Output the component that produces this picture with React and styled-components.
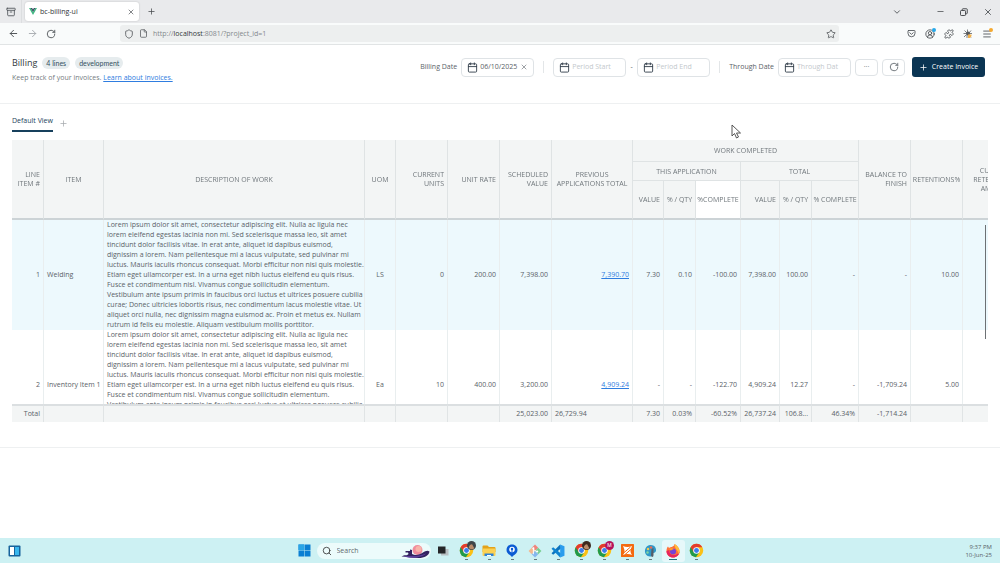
import { useState } from "react";
import styled, { createGlobalStyle } from "styled-components";
import {
  Archive,
  ArrowLeft,
  ArrowRight,
  Calendar,
  ChevronDown,
  CircleUserRound,
  File,
  Menu,
  Minus,
  Plus,
  Puzzle,
  RotateCw,
  Search,
  Shield,
  Star,
  X,
} from "lucide-react";

const LOREM = [
  "Lorem ipsum dolor sit amet, consectetur adipiscing elit. Nulla ac ligula nec",
  "lorem eleifend egestas lacinia non mi. Sed scelerisque massa leo, sit amet",
  "tincidunt dolor facilisis vitae. In erat ante, aliquet id dapibus euismod,",
  "dignissim a lorem. Nam pellentesque mi a lacus vulputate, sed pulvinar mi",
  "luctus. Mauris iaculis rhoncus consequat. Morbi efficitur non nisi quis molestie.",
  "Etiam eget ullamcorper est. In a urna eget nibh luctus eleifend eu quis risus.",
  "Fusce et condimentum nisl. Vivamus congue sollicitudin elementum.",
  "Vestibulum ante ipsum primis in faucibus orci luctus et ultrices posuere cubilia",
  "curae; Donec ultricies lobortis risus, nec condimentum lacus molestie vitae. Ut",
  "aliquet orci nulla, nec dignissim magna euismod ac. Proin et metus ex. Nullam",
  "rutrum id felis eu molestie. Aliquam vestibulum mollis porttitor.",
].join("\n");

const COLUMNS = [
  { key: "line", width: 32, align: "right" },
  { key: "item", width: 60, align: "left" },
  { key: "description", width: 261, align: "left" },
  { key: "uom", width: 31, align: "center" },
  { key: "units", width: 52, align: "right" },
  { key: "rate", width: 52, align: "right" },
  { key: "scheduled", width: 52, align: "right" },
  { key: "previous", width: 81, align: "right", link: true },
  { key: "appValue", width: 31, align: "right" },
  { key: "appQty", width: 32, align: "right" },
  { key: "appComplete", width: 45, align: "right" },
  { key: "totalValue", width: 39, align: "right" },
  { key: "totalQty", width: 32, align: "right" },
  { key: "totalComplete", width: 47, align: "right" },
  { key: "balance", width: 52, align: "right" },
  { key: "retentions", width: 52, align: "right" },
  { key: "retentionAmount", width: 52, align: "right" },
];

const ROWS = [
  {
    line: "1",
    item: "Welding",
    description: LOREM,
    uom: "LS",
    units: "0",
    rate: "200.00",
    scheduled: "7,398.00",
    previous: "7,390.70",
    appValue: "7.30",
    appQty: "0.10",
    appComplete: "-100.00",
    totalValue: "7,398.00",
    totalQty: "100.00",
    totalComplete: "-",
    balance: "-",
    retentions: "10.00",
  },
  {
    line: "2",
    item: "Inventory Item 1",
    description: LOREM,
    uom: "Ea",
    units: "10",
    rate: "400.00",
    scheduled: "3,200.00",
    previous: "4,909.24",
    appValue: "-",
    appQty: "-",
    appComplete: "-122.70",
    totalValue: "4,909.24",
    totalQty: "12.27",
    totalComplete: "-",
    balance: "-1,709.24",
    retentions: "5.00",
  },
];

const TOTALS = {
  line: "Total",
  scheduled: "25,023.00",
  previous: "26,729.94",
  appValue: "7.30",
  appQty: "0.03%",
  appComplete: "-60.52%",
  totalValue: "26,737.24",
  totalQty: "106.8...",
  totalComplete: "46.34%",
  balance: "-1,714.24",
};

const VueLogo = () => (
  <svg width="8" height="7" viewBox="0 0 16 14" aria-hidden="true">
    <path d="M0 0h3.3L8 8.2 12.7 0H16L8 14z" fill="#41b883" />
    <path d="M3.3 0h3L8 3l1.7-3h3L8 8.2z" fill="#35495e" />
  </svg>
);

const RestoreIcon = () => (
  <svg width="8" height="8" viewBox="0 0 16 16" fill="none" stroke="#3c4043" strokeWidth="1.8" aria-hidden="true">
    <rect x="1" y="5" width="10" height="10" rx="1.5" />
    <path d="M4.5 4.5V3A1.5 1.5 0 0 1 6 1.5h7A1.5 1.5 0 0 1 14.5 3v7a1.5 1.5 0 0 1-1.5 1.5h-1.5" />
  </svg>
);

const PocketIcon = () => (
  <svg width="9" height="9" viewBox="0 0 18 18" fill="none" stroke="#54585c" strokeWidth="1.8" strokeLinecap="round" strokeLinejoin="round" aria-hidden="true">
    <path d="M3 3h12a1 1 0 0 1 1 1v4.5a7 7 0 0 1-14 0V4a1 1 0 0 1 1-1z" />
    <path d="M5.5 7.5 9 10.7l3.5-3.2" />
  </svg>
);

const BugIcon = () => (
  <svg width="10" height="10" viewBox="0 0 20 20" aria-hidden="true">
    <path d="M3 3l5 5M9 1v6M16 3l-4 5M1 9h6M2 16l5-5M18 9h-5M8 18v-6M16 17l-4-5" stroke="#565a5d" strokeWidth="1.5" />
    <circle cx="10" cy="9" r="4" fill="#565a5d" />
    <path d="M10 11h7v3l-3 4h-4z" fill="#f3b24c" />
  </svg>
);

const ChromeLogo = ({ badge, badgeText }) => (
  <svg width="19" height="19" viewBox="0 0 34 34" aria-hidden="true">
    <circle cx="17" cy="17" r="12" fill="#fbc116" />
    <path d="M17 17 6.6 11A12 12 0 0 0 16 29l6-9z" fill="#219a4b" />
    <path d="M6.6 11A12 12 0 0 1 27.4 11H17l-5 9z" fill="#e33b2e" />
    <circle cx="17" cy="17" r="5.8" fill="#fff" />
    <circle cx="17" cy="17" r="4.4" fill="#3b7ded" />
    {badge && <circle cx="26" cy="8" r="8" fill={badge} />}
    {badge && !badgeText && <path d="M21 12c1-4 3-6 6-6l4 7c-3 3-7 2-10-1z" fill="#b98b6a" />}
    {badgeText && (
      <text x="26" y="11" fontSize="9" fontFamily="Roboto, sans-serif" textAnchor="middle" fill="#fff">
        {badgeText}
      </text>
    )}
  </svg>
);

const WindowsLogo = () => (
  <svg width="13" height="13" viewBox="0 0 26 26" aria-hidden="true">
    <path d="M1 1h11.5v11.5H1zM13.5 1H25v11.5H13.5zM1 13.5h11.5V25H1zM13.5 13.5H25V25H13.5z" fill="#0b7fd3" />
    <path d="M1 1h11.5v11.5H1z" fill="#2aa5e6" />
  </svg>
);

const WidgetsIcon = () => (
  <svg width="13" height="12" viewBox="0 0 26 24" aria-hidden="true">
    <rect x="1" y="1" width="24" height="22" rx="2" fill="#17639c" />
    <rect x="4" y="4" width="8" height="16" fill="#fff" />
    <rect x="14" y="4" width="8" height="16" fill="#39b7ee" />
  </svg>
);

const SearchArt = () => (
  <svg width="30" height="14" viewBox="0 0 60 28" aria-hidden="true">
    <circle cx="33" cy="12" r="10" fill="#f08c9c" />
    <circle cx="35" cy="10" r="6" fill="#f8b3a8" />
    <path d="M1 25c6-4 11-1 14-5l-1-3h-5v-3h9v-3l4 1v8c8 4 15 1 22-3 5-3 9-5 13-2-1 8-10 13-22 13C22 28 11 25 1 25z" fill="#33225f" />
    <path d="M6 25c14-3 26 2 44-6-6 8-28 11-44 6z" fill="#5b3c99" />
  </svg>
);

const TaskViewIcon = () => (
  <svg width="12" height="12" viewBox="0 0 24 24" aria-hidden="true">
    <rect x="8" y="8" width="15" height="13" fill="#b9c0c3" />
    <rect x="2" y="3" width="15" height="14" fill="#242628" />
  </svg>
);

const FolderIcon = () => (
  <svg width="14" height="14" viewBox="0 0 28 28" aria-hidden="true">
    <path d="M1 5a2 2 0 0 1 2-2h8l3 3h11a2 2 0 0 1 2 2v8H1z" fill="#e3a21a" />
    <rect x="1" y="9" width="26" height="15" rx="2" fill="#fbd153" />
    <path d="M5 19h18v5H5z" fill="#2c82d8" />
    <path d="M10 22h8v2h-8z" fill="#fff" />
  </svg>
);

const PinIcon = () => (
  <svg width="12" height="13" viewBox="0 0 24 26" aria-hidden="true">
    <path d="M12 1c7 0 11 5 11 11 0 5-4 9-8 11l-3 3-3-3c-4-2-8-6-8-11C1 6 5 1 12 1z" fill="#0b5bd3" />
    <circle cx="12" cy="11" r="5.5" fill="#fff" />
    <circle cx="12" cy="10" r="2.5" fill="#0b5bd3" />
    <path d="M12 11v5" stroke="#0b5bd3" strokeWidth="2" />
  </svg>
);

const GitIcon = () => (
  <svg width="14" height="14" viewBox="0 0 26 26" aria-hidden="true">
    <path d="m13 1 6 6-6 6-6-6z" fill="#f0857c" />
    <path d="m7 7 6 6-6 6-6-6z" fill="#f3b98e" />
    <path d="m19 7 6 6-6 6-6-6z" fill="#79cf92" />
    <path d="m13 13 6 6-6 6-6-6z" fill="#85b7ee" />
    <path d="M10 7v12M10 10l6 4" stroke="#fff" strokeWidth="1.8" />
    <circle cx="10" cy="8" r="2" fill="#fff" />
    <circle cx="17" cy="14" r="2" fill="#fff" />
  </svg>
);

const CodeIcon = () => (
  <svg width="14" height="14" viewBox="0 0 26 26" aria-hidden="true">
    <path d="M17 1 19 8 4 20 1 17z" fill="#0b72bd" />
    <path d="m4 6-3 3 16 16 2-7z" fill="#0f83d0" />
    <path d="m17 1 8 3v18l-8 3z" fill="#2a9ded" />
  </svg>
);

const OrangeAppIcon = () => (
  <svg width="13" height="13" viewBox="0 0 26 26" aria-hidden="true">
    <rect width="26" height="26" rx="1" fill="#f46a10" />
    <path d="M4 4c5 2 11 3 18 0-2 5-3 8-3 10 0 3 1 5 3 8-6-3-12-3-18 0 2-3 3-5 3-8 0-2-1-6-3-10z" fill="#fff" />
    <path d="m4 19 15-13M7 22 22 9" stroke="#f46a10" strokeWidth="2" />
  </svg>
);

const PaintIcon = () => (
  <svg width="13" height="14" viewBox="0 0 26 28" aria-hidden="true">
    <path d="M12 2C20 1 25 7 24 14c-1 4-5 3-7 5s0 6-5 6C5 25 1 19 2 12 3 6 7 3 12 2z" fill="#2e98c9" />
    <circle cx="8" cy="10" r="2.5" fill="#f3c74f" />
    <circle cx="14" cy="7" r="2.5" fill="#e86c55" />
    <circle cx="7" cy="17" r="2.5" fill="#7fd4a1" />
    <path d="m15 10 4-2v14c0 5-5 5-5 0z" fill="#555e68" />
  </svg>
);

const FirefoxLogo = () => (
  <svg width="14" height="14" viewBox="0 0 28 28" aria-hidden="true">
    <path d="M14 27C6 27 1 21 1 14c0-4 1-7 3-9l2 3c2-2 4-2 6-2l1-1c3-1 4-3 4-5 5 3 10 8 10 14 0 8-6 13-13 13z" fill="#ff7139" />
    <path d="M1 14c0 8 6 13 13 13s13-5 13-12c-2 5-7 8-12 7-6 0-9-5-8-10z" fill="#e8255e" />
    <path d="M17 0c5 3 10 8 10 14 0 3-1 5-2 7 0-5-2-8-5-11-2-3-3-6-3-10z" fill="#ffbd3a" />
    <circle cx="14" cy="15" r="6" fill="#7542d8" />
    <path d="M7 9c4-2 8-1 10 2-3-1-4 1-7 2-2 0-3-2-3-4z" fill="#ff9a2d" />
  </svg>
);

const CursorArrow = () => (
  <svg width="11" height="15" viewBox="0 0 22 30" aria-hidden="true">
    <path d="M2 2v22l5-5 4 9 4-2-4-8h8z" fill="#fff" stroke="#444" strokeWidth="1.8" />
  </svg>
);

const TASKBAR_APPS = [
  { name: "Task view", icon: <TaskViewIcon /> },
  { name: "Chrome profile", icon: <ChromeLogo badge="#3f4549" />, running: true },
  { name: "Files", icon: <FolderIcon />, running: true },
  { name: "Maps", icon: <PinIcon />, running: true },
  { name: "Git", icon: <GitIcon />, running: true },
  { name: "Code", icon: <CodeIcon />, running: true },
  { name: "Chrome work", icon: <ChromeLogo badge="#3d2a20" />, running: true },
  { name: "Chrome M", icon: <ChromeLogo badge="#b5145c" badgeText="M" />, running: true },
  { name: "Orange app", icon: <OrangeAppIcon />, running: true },
  { name: "Paint", icon: <PaintIcon />, running: true },
  { name: "Firefox", icon: <FirefoxLogo />, running: true, active: true },
  { name: "Chrome", icon: <ChromeLogo />, running: true },
];

const DateField = ({ label, hideLabel, placeholder, initial = "" }) => {
  const [value, setValue] = useState(initial);

  return (
    <FieldLabel>
      {!hideLabel && <span>{label}</span>}
      <DateBox>
        <Calendar size={11} color="#333f4b" strokeWidth={2} />
        <DateInput
          type="text"
          aria-label={label}
          placeholder={placeholder}
          value={value}
          onChange={(e) => setValue(e.target.value)}
        />
        {value && (
          <ClearBtn type="button" aria-label="Clear date" onClick={() => setValue("")}>
            <X size={8} />
          </ClearBtn>
        )}
      </DateBox>
    </FieldLabel>
  );
};

const BillingTable = () => (
  <TableArea>
    <TableScroll>
      <Table>
        <colgroup>
          {COLUMNS.map((col) => (
            <Col key={col.key} $width={col.width} />
          ))}
        </colgroup>
        <thead>
          <HeadRow $height={22}>
            <Th rowSpan={3} $align="right" $last>LINE ITEM #</Th>
            <Th rowSpan={3} $last>ITEM</Th>
            <Th rowSpan={3} $last>DESCRIPTION OF WORK</Th>
            <Th rowSpan={3} $last>UOM</Th>
            <Th rowSpan={3} $align="right" $last>CURRENT UNITS</Th>
            <Th rowSpan={3} $align="right" $last>UNIT RATE</Th>
            <Th rowSpan={3} $align="right" $last>SCHEDULED VALUE</Th>
            <Th rowSpan={3} $last>PREVIOUS APPLICATIONS TOTAL</Th>
            <Th colSpan={6}>WORK COMPLETED</Th>
            <Th rowSpan={3} $align="right" $last>BALANCE TO FINISH</Th>
            <Th rowSpan={3} $last $tight>RETENTIONS%</Th>
            <Th rowSpan={3} $align="right" $last>CURRENT RETENTION AMOUNT</Th>
          </HeadRow>
          <HeadRow $height={19}>
            <Th colSpan={3}>THIS APPLICATION</Th>
            <Th colSpan={3}>TOTAL</Th>
          </HeadRow>
          <HeadRow $height={39}>
            <Th $align="right" $last>VALUE</Th>
            <Th $last $tight>% / QTY</Th>
            <Th $last $tight $active>%COMPLETE</Th>
            <Th $align="right" $last>VALUE</Th>
            <Th $last $tight>% / QTY</Th>
            <Th $last $tight>% COMPLETE</Th>
          </HeadRow>
        </thead>
        <tbody>
          {ROWS.map((row, i) => (
            <BodyRow key={row.line} $selected={i === 0}>
              {COLUMNS.map((col) => (
                <Td key={col.key} $align={col.align}>
                  {col.link ? <TextLink href="#">{row[col.key]}</TextLink> : row[col.key]}
                </Td>
              ))}
            </BodyRow>
          ))}
        </tbody>
        <tfoot>
          <tr>
            {COLUMNS.map((col) => (
              <TotalCell key={col.key} $align={col.link ? "left" : col.align}>
                {TOTALS[col.key]}
              </TotalCell>
            ))}
          </tr>
        </tfoot>
      </Table>
    </TableScroll>
    <ScrollThumb />
  </TableArea>
);

export default function App() {
  return (
    <Desktop>
      <GlobalStyle />
      <TabStrip>
        <StripCell>
          <Archive size={10} />
        </StripCell>
        <BrowserTab>
          <VueLogo />
          <TabTitle>bc-billing-ui</TabTitle>
          <IconBtn type="button" aria-label="Close tab">
            <X size={8} />
          </IconBtn>
        </BrowserTab>
        <IconBtn type="button" aria-label="New tab">
          <Plus size={9} />
        </IconBtn>
        <WindowControls>
          <IconBtn type="button" aria-label="List all tabs">
            <ChevronDown size={10} />
          </IconBtn>
          <Spacer />
          <IconBtn type="button" aria-label="Minimize">
            <Minus size={9} />
          </IconBtn>
          <IconBtn type="button" aria-label="Restore">
            <RestoreIcon />
          </IconBtn>
          <IconBtn type="button" aria-label="Close">
            <X size={10} />
          </IconBtn>
        </WindowControls>
      </TabStrip>

      <NavBar>
        <NavGroup>
          <IconBtn type="button" aria-label="Back">
            <ArrowLeft size={11} />
          </IconBtn>
          <IconBtn type="button" aria-label="Forward" $muted>
            <ArrowRight size={11} />
          </IconBtn>
          <IconBtn type="button" aria-label="Reload">
            <RotateCw size={10} />
          </IconBtn>
        </NavGroup>
        <UrlBox>
          <Shield size={10} />
          <File size={9} />
          <Url>
            http://<b>localhost</b>:8081/?project_id=1
          </Url>
          <Star size={10} />
        </UrlBox>
        <ToolGroup>
          <IconBtn type="button" aria-label="Pocket">
            <PocketIcon />
          </IconBtn>
          <IconBtn type="button" aria-label="Account">
            <CircleUserRound size={10} />
            <Dot $color="#27a9ea" />
          </IconBtn>
          <IconBtn type="button" aria-label="Extensions">
            <Puzzle size={10} />
          </IconBtn>
          <IconBtn type="button" aria-label="Debugger">
            <BugIcon />
          </IconBtn>
          <IconBtn type="button" aria-label="Menu">
            <Menu size={10} />
            <Dot $color="#f5a930" />
          </IconBtn>
        </ToolGroup>
      </NavBar>

      <Page>
        <PageHeader>
          <div>
            <TitleRow>
              <Title>Billing</Title>
              <Pill>4 lines</Pill>
              <Pill>development</Pill>
            </TitleRow>
            <Subtitle>
              Keep track of your invoices. <TextLink href="#">Learn about invoices.</TextLink>
            </Subtitle>
          </div>
          <Filters>
            <DateField label="Billing Date" initial="06/10/2025" />
            <Divider />
            <DateField label="Period Start" placeholder="Period Start" hideLabel />
            <Dash>-</Dash>
            <DateField label="Period End" placeholder="Period End" hideLabel />
            <Divider />
            <DateField label="Through Date" placeholder="Through Dat" />
            <ButtonRow>
              <SmallBtn type="button" aria-label="More">
                ···
              </SmallBtn>
              <SmallBtn type="button" aria-label="Refresh">
                <RotateCw size={10} />
              </SmallBtn>
              <PrimaryBtn type="button">
                <Plus size={9} />
                Create Invoice
              </PrimaryBtn>
            </ButtonRow>
          </Filters>
        </PageHeader>
        <Views>
          <ViewTab type="button">Default View</ViewTab>
          <IconBtn type="button" aria-label="Add view" $muted>
            <Plus size={9} />
          </IconBtn>
        </Views>
        <BillingTable />
        <Pointer>
          <CursorArrow />
        </Pointer>
      </Page>

      <Taskbar>
        <WidgetsIcon />
        <TaskApps>
          <TaskBtn type="button" aria-label="Start">
            <WindowsLogo />
          </TaskBtn>
          <SearchBox>
            <Search size={10} color="#333" />
            <SearchInput type="text" aria-label="Search" placeholder="Search" />
            <SearchArt />
          </SearchBox>
          {TASKBAR_APPS.map((app) => (
            <TaskBtn key={app.name} type="button" aria-label={app.name} $running={app.running} $active={app.active}>
              {app.icon}
            </TaskBtn>
          ))}
        </TaskApps>
        <Clock>
          <span>9:37 PM</span>
          <span>10-Jun-25</span>
        </Clock>
      </Taskbar>
    </Desktop>
  );
}

const GlobalStyle = createGlobalStyle`
  * {
    box-sizing: border-box;
  }
  body {
    margin: 0;
    background: #fff;
  }
  body, button, input {
    font-family: "Open Sans", "Noto Sans", sans-serif;
    font-size: 7px;
    line-height: 10px;
    color: #5a6268;
  }
  button {
    padding: 0;
    border: none;
    background: none;
    cursor: pointer;
  }
  svg {
    display: block;
    flex-shrink: 0;
  }
`;

const Desktop = styled.div`
  display: flex;
  flex-direction: column;
  min-height: 100vh;
`;

const TabStrip = styled.div`
  display: flex;
  align-items: center;
  gap: 7px;
  height: 23px;
  padding-right: 7px;
  background: #e9eaec;
  color: #4b4f54;
`;

const StripCell = styled.div`
  display: flex;
  align-items: center;
  justify-content: center;
  width: 22px;
  height: 23px;
  border-right: 1px solid #dcdee0;
  margin-right: -4px;
`;

const BrowserTab = styled.div`
  display: flex;
  align-items: center;
  gap: 3px;
  width: 114px;
  height: 19px;
  padding: 0 3px 0 4px;
  border-radius: 3px;
  background: #fff;
  box-shadow: 0 0 2px rgba(0, 0, 0, 0.2);
`;

const TabTitle = styled.span`
  flex: 1;
  color: #2f3337;
`;

const IconBtn = styled.button`
  position: relative;
  display: flex;
  align-items: center;
  justify-content: center;
  width: 10px;
  height: 12px;
  color: ${({ $muted }) => ($muted ? "#a5aaae" : "#45494d")};
`;

const WindowControls = styled.div`
  display: flex;
  gap: 14px;
  margin-left: auto;
`;

const Spacer = styled.div`
  width: 5px;
`;

const NavBar = styled.div`
  display: flex;
  align-items: center;
  height: 22px;
  padding: 0 8px;
  border-bottom: 1px solid #e1e4e5;
  background: #f9fbfb;
`;

const NavGroup = styled.div`
  display: flex;
  gap: 9px;
  width: 112px;
`;

const UrlBox = styled.div`
  display: flex;
  flex: 1;
  align-items: center;
  gap: 5px;
  height: 17px;
  padding: 0 3px 0 4px;
  border-radius: 3px;
  background: #edefef;
  color: #54585c;
`;

const Url = styled.span`
  flex: 1;
  color: #84898d;

  b {
    font-weight: 500;
    color: #33373a;
  }
`;

const ToolGroup = styled.div`
  display: flex;
  justify-content: flex-end;
  gap: 9px;
  width: 153px;
`;

const Dot = styled.span`
  position: absolute;
  top: 0;
  right: -1px;
  width: 4px;
  height: 4px;
  border-radius: 50%;
  background: ${({ $color }) => $color};
`;

const Page = styled.main`
  position: relative;
  flex: 1;
`;

const PageHeader = styled.header`
  display: flex;
  align-items: flex-start;
  justify-content: space-between;
  height: 59px;
  padding: 12px 15px 0 12px;
  border-bottom: 1px solid #eef0f1;
`;

const TitleRow = styled.div`
  display: flex;
  align-items: center;
  gap: 5px;
`;

const Title = styled.h1`
  margin: 0;
  font-size: 9px;
  font-weight: 400;
  line-height: 12px;
  color: #33393e;
`;

const Pill = styled.span`
  padding: 0 4px;
  border-radius: 6px;
  background: #e6ecee;
  font-family: Lato, "Open Sans", sans-serif;
  line-height: 12px;
  color: #34505f;
`;

const Subtitle = styled.p`
  margin: 4px 0 0;
  color: #757c82;
`;

const TextLink = styled.a`
  color: #2f7de0;
  text-decoration: underline;
`;

const Filters = styled.div`
  display: flex;
  align-items: center;
`;

const FieldLabel = styled.label`
  display: flex;
  align-items: center;
  gap: 4px;
`;

const DateBox = styled.span`
  display: flex;
  align-items: center;
  gap: 2px;
  width: 73px;
  height: 19px;
  padding: 0 5px;
  border: 1px solid #dfe3e6;
  border-radius: 4px;
  background: #fff;
`;

const DateInput = styled.input`
  flex: 1;
  width: 0;
  min-width: 0;
  padding: 0;
  border: none;
  outline: none;
  background: none;

  &::placeholder {
    color: #c3c8cc;
  }
`;

const ClearBtn = styled.button`
  color: #6c7378;
`;

const Divider = styled.span`
  width: 1px;
  height: 12px;
  margin: 0 9px;
  background: #e3e6e8;
`;

const Dash = styled.span`
  width: 11px;
  text-align: center;
`;

const ButtonRow = styled.div`
  display: flex;
  align-items: center;
  gap: 4px;
  margin-left: 4px;
`;

const SmallBtn = styled.button`
  display: flex;
  align-items: center;
  justify-content: center;
  width: 23px;
  height: 17px;
  border: 1px solid #dfe3e6;
  border-radius: 4px;
  background: #fff;
`;

const PrimaryBtn = styled.button`
  display: flex;
  align-items: center;
  justify-content: center;
  gap: 4px;
  width: 73px;
  height: 20px;
  margin-left: 3px;
  border-radius: 3px;
  background: #0b3553;
  color: #fff;
`;

const Views = styled.div`
  display: flex;
  align-items: center;
  gap: 6px;
  padding: 10px 12px 0;
`;

const ViewTab = styled.button`
  height: 18px;
  padding-bottom: 3px;
  border-bottom: 2px solid #17405c;
  font-weight: 500;
  color: #23435a;
`;

const TableArea = styled.section`
  position: relative;
  padding: 8px 12px 25px;
  border-bottom: 1px solid #eef0f1;
`;

const TableScroll = styled.div`
  max-height: 282px;
  overflow: auto;
  scrollbar-width: none;
`;

const Table = styled.table`
  width: 100%;
  min-width: 1003px;
  table-layout: fixed;
  border-spacing: 0;

  thead {
    position: sticky;
    top: 0;
  }
  tfoot {
    position: sticky;
    bottom: 0;
  }
`;

const Col = styled.col`
  width: ${({ $width }) => $width}px;
`;

const HeadRow = styled.tr`
  height: ${({ $height }) => $height}px;
`;

const Th = styled.th`
  padding: 0 ${({ $tight }) => ($tight ? 0 : 3)}px;
  border-right: 1px solid #dfe3e4;
  border-bottom: ${({ $last }) => ($last ? "2px solid #ccd3d6" : "1px solid #dfe3e4")};
  background: ${({ $active }) => ($active ? "#fff" : "#f3f5f5")};
  font-weight: 400;
  line-height: 9px;
  text-align: ${({ $align }) => $align || "center"};
  white-space: ${({ $tight }) => ($tight ? "nowrap" : "normal")};
  color: #70777c;
`;

const BodyRow = styled.tr`
  background: ${({ $selected }) => ($selected ? "#edf9fd" : "#fff")};
`;

const Td = styled.td`
  padding: 0 3px;
  border-right: 1px solid #e9eeef;
  text-align: ${({ $align }) => $align};
  white-space: pre;
`;

const TotalCell = styled.td`
  height: 18px;
  padding: 0 3px;
  border-top: 2px solid #dbdfe1;
  border-right: 1px solid #e0e4e5;
  background: #f3f5f5;
  text-align: ${({ $align }) => $align};
  white-space: nowrap;
`;

const ScrollThumb = styled.div`
  position: absolute;
  top: 93px;
  right: 14px;
  width: 1px;
  height: 114px;
  background: #6d7174;
`;

const Pointer = styled.div`
  position: absolute;
  top: 79px;
  left: 731px;
`;

const Taskbar = styled.footer`
  display: grid;
  grid-template-columns: 1fr auto 1fr;
  align-items: center;
  height: 25px;
  padding: 0 8px;
  background: #cdf1f3;
`;

const TaskApps = styled.div`
  display: flex;
  align-items: center;
`;

const TaskBtn = styled.button`
  position: relative;
  display: flex;
  align-items: center;
  justify-content: center;
  width: 23px;
  height: 22px;
  border-radius: 3px;
  background: ${({ $active }) => ($active ? "#e6f8fa" : "none")};

  &::after {
    content: "";
    display: ${({ $running }) => ($running ? "block" : "none")};
    position: absolute;
    bottom: 2px;
    width: ${({ $active }) => ($active ? 8 : 3)}px;
    height: 1px;
    background: ${({ $active }) => ($active ? "#23717d" : "#66787c")};
  }
`;

const SearchBox = styled.label`
  display: flex;
  align-items: center;
  gap: 5px;
  width: 114px;
  height: 16px;
  margin: 0 1px;
  padding-left: 5px;
  border-radius: 8px;
  background: #ecfbfb;
`;

const SearchInput = styled.input`
  flex: 1;
  width: 0;
  min-width: 0;
  padding: 0;
  border: none;
  outline: none;
  background: none;

  &::placeholder {
    color: #63696d;
  }
`;

const Clock = styled.div`
  display: flex;
  flex-direction: column;
  align-items: flex-end;
  line-height: 8px;
  font-size: 6px;
`;
